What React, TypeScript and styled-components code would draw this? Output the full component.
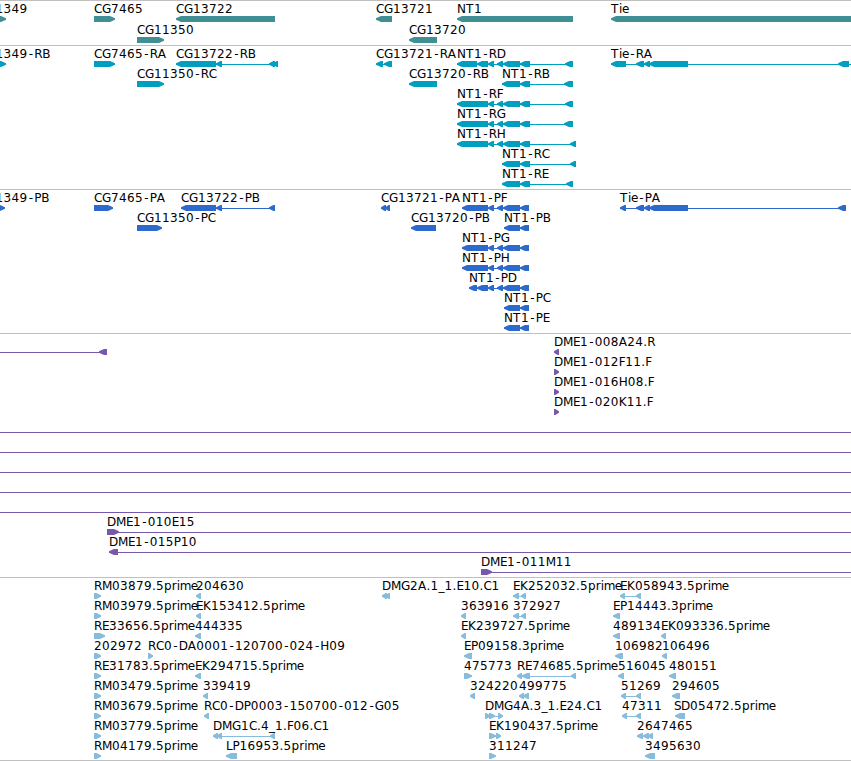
import React from 'react';
import styled, { createGlobalStyle, ThemeProvider } from 'styled-components';

type Span = [number, number];
type Direction = 'left' | 'right';

interface Feature {
  label?: string;
  row: number;
  x: number;
  dir?: Direction;
  exons?: Span[];
  line?: Span;
}

interface TrackData {
  name: string;
  color: string;
  height: number;
  pitch: number;
  features: Feature[];
}

const theme = {
  colors: {
    Background: '#ffffff',
    Border: '#c0c0c0',
    Text: '#000000',
    Gene: '#3f8f95',
    Transcript: '#009ebf',
    Protein: '#2e6acd',
    Clone: '#7859a9',
    Insertion: '#87bcdd',
  },
};

const WIDTH = 851;
const BAR_HEIGHT = 6;

// Advances for the 12px labels, in pixels
const advances: Record<string, number> = {
  A: 8.5, B: 8, C: 8, D: 9, E: 7, F: 6.5, G: 9, H: 9, K: 8, L: 6.5, M: 10,
  N: 9, P: 7, R: 8, S: 7, T: 8, '-': 6.7, '.': 4, _: 6,
  e: 7, i: 3, m: 11, p: 7.7, r: 5,
};

const f = (
  row: number,
  label: string,
  dir: Direction,
  exons: Span[],
  x = exons[0][0],
  line?: Span
): Feature => ({ row, label, dir, exons, x, line });

const nt1Middle: Span[] = [[488, 494], [497, 503], [503, 520]];

const genes: Feature[] = [
  f(0, '1349', 'right', [[-20, 6]], -4.5),
  f(0, 'CG7465', 'right', [[94, 115]]),
  f(1, 'CG11350', 'right', [[137, 164]]),
  f(0, 'CG13722', 'left', [[176, 275]]),
  f(0, 'CG13721', 'left', [[376, 392]]),
  f(1, 'CG13720', 'left', [[409, 437]]),
  f(0, 'NT1', 'left', [[457, 573]]),
  f(0, 'Tie', 'left', [[611, 860]]),
];

const transcripts: Feature[] = [
  f(0, '1349-RB', 'right', [[-20, 6]], -4.5),
  f(0, 'CG7465-RA', 'right', [[94, 97], [95, 115]]),
  f(1, 'CG11350-RC', 'right', [[137, 164]]),
  f(0, 'CG13722-RB', 'left', [[176, 216], [216, 222], [269, 275], [273, 278]]),
  f(0, 'CG13721-RA', 'left', [[376, 383], [384, 392]]),
  f(1, 'CG13720-RB', 'left', [[409, 437]]),
  f(0, 'NT1-RD', 'left', [[457, 477], [477, 488], ...nt1Middle, [520, 530], [565, 573]]),
  f(1, 'NT1-RB', 'left', [[502, 520], [520, 530], [564, 573]]),
  f(2, 'NT1-RF', 'left', [[457, 488], ...nt1Middle, [520, 530], [565, 573]]),
  f(3, 'NT1-RG', 'left', [[457, 488], ...nt1Middle, [520, 530], [564, 573]]),
  f(4, 'NT1-RH', 'left', [[457, 488], ...nt1Middle, [520, 530], [570, 576]]),
  f(5, 'NT1-RC', 'left', [[502, 520], [520, 530], [570, 576]]),
  f(6, 'NT1-RE', 'left', [[502, 520], [520, 530], [566, 573]]),
  f(0, 'Tie-RA', 'left', [[611, 626], [636, 644], [644, 650], [649, 688], [838, 849]], 611, [611, 851]),
];

const proteins: Feature[] = [
  f(0, '1349-PB', 'right', [[-20, 5]], -4.5),
  f(0, 'CG7465-PA', 'right', [[94, 97], [95, 113]]),
  f(1, 'CG11350-PC', 'right', [[137, 162]]),
  f(0, 'CG13722-PB', 'left', [[181, 216], [216, 222], [269, 275]]),
  f(0, 'CG13721-PA', 'left', [[381, 386], [385, 390]]),
  f(1, 'CG13720-PB', 'left', [[411, 436]]),
  f(0, 'NT1-PF', 'left', [[462, 488], ...nt1Middle, [520, 529]]),
  f(1, 'NT1-PB', 'left', [[504, 520], [520, 529]]),
  f(2, 'NT1-PG', 'left', [[462, 488], ...nt1Middle, [520, 529]]),
  f(3, 'NT1-PH', 'left', [[462, 488], ...nt1Middle, [520, 529]]),
  f(4, 'NT1-PD', 'left', [[469, 477], [477, 488], ...nt1Middle, [520, 529]]),
  f(5, 'NT1-PC', 'left', [[504, 520], [520, 529]]),
  f(6, 'NT1-PE', 'left', [[504, 520], [520, 529]]),
  f(0, 'Tie-PA', 'left', [[620, 626], [636, 644], [644, 650], [649, 688], [838, 846]]),
];

const clones: Feature[] = [
  { row: 0, x: 0, dir: 'left', exons: [[99, 107]], line: [0, 107] },
  f(0, 'DME1-008A24.R', 'left', [[554, 559]]),
  f(1, 'DME1-012F11.F', 'right', [[554, 559]]),
  f(2, 'DME1-016H08.F', 'right', [[554, 559]]),
  f(3, 'DME1-020K11.F', 'right', [[554, 559]]),
  ...[4, 5, 6, 7, 8].map((row): Feature => ({ row, x: 0, line: [0, WIDTH] })),
  f(9, 'DME1-010E15', 'right', [[107, 119]], 107, [107, WIDTH]),
  f(10, 'DME1-015P10', 'left', [[109, 118]], 109, [109, WIDTH]),
  f(11, 'DME1-011M11', 'right', [[481, 492]], 481, [481, WIDTH]),
];

const insertions: Feature[] = [
  f(0, 'RM03879.5prime', 'right', [[94, 98], [95, 101]]),
  f(1, 'RM03979.5prime', 'right', [[94, 98], [95, 101]]),
  f(2, 'RE33656.5prime', 'right', [[94, 98], [95, 105]]),
  f(3, '202972', 'right', [[94, 98], [95, 101]]),
  f(4, 'RE31783.5prime', 'right', [[94, 98], [95, 101]]),
  f(5, 'RM03479.5prime', 'right', [[94, 98], [95, 101]]),
  f(6, 'RM03679.5prime', 'right', [[94, 98], [95, 101]]),
  f(7, 'RM03779.5prime', 'right', [[94, 98], [95, 101]]),
  f(8, 'RM04179.5prime', 'right', [[94, 98], [95, 101]]),
  f(0, '204630', 'left', [[196, 201]]),
  f(1, 'EK153412.5prime', 'left', [[196, 201]]),
  f(2, '444335', 'left', [[195, 201]]),
  f(3, 'RC0-DA0001-120700-024-H09', 'right', [[148, 153]]),
  f(4, 'EK294715.5prime', 'left', [[195, 201]]),
  f(5, '339419', 'left', [[203, 208]]),
  f(6, 'RC0-DP0003-150700-012-G05', 'left', [[204, 209]]),
  f(7, 'DMG1C.4_1.F06.C1', 'left', [[213, 218], [217, 222], [270, 275]]),
  f(8, 'LP16953.5prime', 'left', [[226, 237]]),
  f(0, 'DMG2A.1_1.E10.C1', 'left', [[382, 387], [385, 390]]),
  f(1, '363916', 'left', [[461, 466]]),
  f(2, 'EK239727.5prime', 'left', [[461, 466]]),
  f(3, 'EP09158.3prime', 'left', [[464, 472]]),
  f(4, '475773', 'right', [[464, 472]]),
  f(5, '324220', 'left', [[470, 475]]),
  f(6, 'DMG4A.3_1.E24.C1', 'right', [[485, 490], [489, 495], [498, 503]]),
  f(7, 'EK190437.5prime', 'right', [[489, 496], [496, 501]]),
  f(8, '311247', 'right', [[489, 496]]),
  f(0, 'EK252032.5prime', 'left', [[513, 519], [521, 526]]),
  f(1, '372927', 'left', [[513, 519], [521, 526]]),
  f(4, 'RE74685.5prime', 'left', [[517, 522], [522, 530], [571, 576]]),
  f(5, '499775', 'left', [[519, 524], [523, 529]]),
  f(0, 'EK058943.5prime', 'left', [[620, 625], [636, 641]]),
  f(1, 'EP14443.3prime', 'left', [[613, 620]]),
  f(2, '489134', 'left', [[613, 620]]),
  f(3, '106982', 'left', [[615, 623]]),
  f(4, '516045', 'left', [[618, 624]]),
  f(5, '51269', 'left', [[621, 626], [636, 641]]),
  f(6, '47311', 'left', [[622, 627], [636, 641]]),
  f(7, '2647465', 'left', [[637, 643], [643, 649], [648, 653]]),
  f(8, '3495630', 'left', [[645, 655]]),
  f(2, 'EK093336.5prime', 'left', [[661, 666]]),
  f(3, '106496', 'left', [[662, 667]]),
  f(4, '480151', 'left', [[669, 676]]),
  f(5, '294605', 'left', [[672, 680]]),
  f(6, 'SD05472.5prime', 'left', [[675, 685]], 674),
];

const tracks: TrackData[] = [
  { name: 'genes', color: theme.colors.Gene, height: 44, pitch: 21, features: genes },
  { name: 'transcripts', color: theme.colors.Transcript, height: 143, pitch: 20, features: transcripts },
  { name: 'proteins', color: theme.colors.Protein, height: 143, pitch: 20, features: proteins },
  { name: 'clones', color: theme.colors.Clone, height: 243, pitch: 20, features: clones },
  { name: 'insertions', color: theme.colors.Insertion, height: 182, pitch: 20, features: insertions },
];

const letterPositions = (label: string, start: number) => {
  let x = start;
  return label
    .split('')
    .map((letter) => {
      // the hyphen is narrow, so it sits in the middle of its cell
      const current = letter === '-' ? x + 1.3 : x;
      x += advances[letter] ?? 8;
      return current;
    })
    .join(' ');
};

const arrowPoints = ([start, end]: Span, top: number, dir: Direction) => {
  const length = end - start;
  const head = Math.min(5, length * 0.75);
  const bottom = top + BAR_HEIGHT;
  const tip = dir === 'left' ? start : end;
  const back = dir === 'left' ? end : start;
  const neck = dir === 'left' ? start + head : end - head;
  return [
    [tip, top + 2.3],
    [neck, top],
    [back, top],
    [back, bottom],
    [neck, bottom],
    [tip, top + 3.7],
  ].join(' ');
};

const FeatureGlyph = ({ feature, pitch }: { feature: Feature; pitch: number }) => {
  const { label, row, x, dir = 'left', exons = [] } = feature;
  const offset = row * pitch;
  const line: Span = feature.line ?? [exons[0][0], exons[exons.length - 1][1]];

  return (
    <g>
      {(feature.line || exons.length > 1) && (
        <rect x={line[0]} y={offset + 18} width={line[1] - line[0]} height={1} />
      )}
      {exons.map((exon) => (
        <polygon key={exon[0]} points={arrowPoints(exon, offset + 15, dir)} />
      ))}
      {label && (
        <Label x={letterPositions(label, x)} y={offset + 12}>
          {label}
        </Label>
      )}
    </g>
  );
};

const App = () => {
  return (
    <ThemeProvider theme={theme}>
      <GlobalStyle />
      <Browser>
        {tracks.map(({ name, color, height, pitch, features }) => (
          <Track key={name} aria-label={name}>
            <Canvas $color={color} $height={height}>
              {features.map((feature, index) => (
                <FeatureGlyph key={index} feature={feature} pitch={pitch} />
              ))}
            </Canvas>
          </Track>
        ))}
      </Browser>
    </ThemeProvider>
  );
};

export default App;

const GlobalStyle = createGlobalStyle`
  body {
    margin: 0;
    background: ${theme.colors.Background};
    overflow: hidden;
  }
`;

const Browser = styled.main`
  display: flex;
  flex-direction: column;
  width: ${WIDTH}px;
  border-bottom: 1px solid ${theme.colors.Border};
`;

const Track = styled.section`
  border-top: 1px solid ${theme.colors.Border};
`;

const Canvas = styled.svg<{ $color: string; $height: number }>`
  display: block;
  width: 100%;
  height: ${({ $height }) => $height}px;
  fill: ${({ $color }) => $color};
`;

const Label = styled.text`
  fill: ${theme.colors.Text};
  font-family: 'DejaVu Sans', sans-serif;
  font-size: 12px;
`;
